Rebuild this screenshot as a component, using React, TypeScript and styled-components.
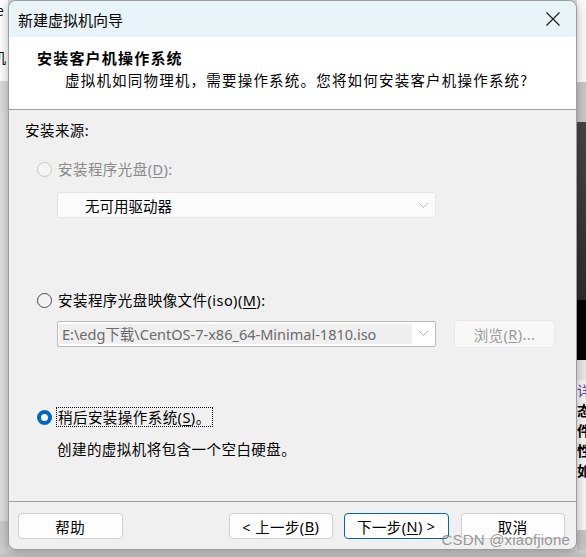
import React from "react"
import styled, { createGlobalStyle } from "styled-components"

const GlobalStyle = createGlobalStyle`
  html, body {
    margin: 0;
    padding: 0;
    background: #d6d6d6;
    overflow: hidden;
  }
  body {
    font-family: "Noto Sans", "Noto Sans CJK SC", sans-serif;
    font-size: 14.5px;
    color: #000;
  }
`

const Desktop = styled("div")`
  position: relative;
  display: grid;
  grid-template-columns: 8px 569px 9px;
  grid-template-rows: 550px 7px;
  width: 586px;
  height: 557px;
  overflow: hidden;
`

const Edge = styled("div")`
  display: flex;
  flex-direction: column;
  overflow: hidden;
`

const Stripe = styled("div")<{ $h: number; $bg: string; $color?: string }>`
  flex: 0 0 ${({ $h }) => $h}px;
  background: ${({ $bg }) => $bg};
  color: ${({ $color }) => $color || "#000"};
  font-family: "Noto Sans CJK SC", sans-serif;
  font-size: 14px;
  line-height: 20px;
  white-space: nowrap;
  overflow: hidden;
`

const BottomStrip = styled("div")`
  grid-column: 1 / 4;
  background: linear-gradient(#cfcfcf, #bdbdbd);
`

const Dialog = styled("div")`
  display: flex;
  flex-direction: column;
  border: 1px solid #9c9c9c;
  border-radius: 8px;
  overflow: hidden;
  background: #f0f0f0;
  box-shadow: 0 2px 10px rgba(0, 0, 0, 0.28);
  box-sizing: border-box;
  z-index: 1;
`

const TitleBar = styled("div")`
  display: flex;
  align-items: center;
  justify-content: space-between;
  height: 36px;
  flex: 0 0 36px;
  padding: 0 0 0 9px;
  background: #e8f4f7;
  font-family: "Noto Sans CJK SC", sans-serif;
  font-size: 15px;
`

const CloseButton = styled("div")`
  display: flex;
  align-items: center;
  justify-content: center;
  width: 46px;
  height: 36px;
`

const Header = styled("div")`
  flex: 0 0 73px;
  display: flex;
  flex-direction: column;
  background: #fff;
  border-bottom: 1px solid #a0a0a0;
  box-sizing: border-box;
  padding: 10px 0 0 28px;
`

const HeaderTitle = styled("div")`
  font-family: "Noto Sans CJK SC", sans-serif;
  font-weight: 700;
  font-size: 15px;
  letter-spacing: 1.2px;
  line-height: 22px;
`

const HeaderSub = styled("div")`
  font-family: "Noto Sans CJK SC", sans-serif;
  font-size: 14.5px;
  letter-spacing: 1.2px;
  line-height: 22px;
  padding-left: 28px;
`

const Body = styled("div")`
  flex: 1;
  display: flex;
  flex-direction: column;
  padding: 10px 0 0 16px;
  letter-spacing: 0.45px;
`

const Text = styled("div")<{ $top?: number; $indent?: number; $muted?: boolean }>`
  margin-top: ${({ $top }) => $top || 0}px;
  padding-left: ${({ $indent }) => $indent || 0}px;
  line-height: 20px;
  color: ${({ $muted }) => ($muted ? "#8a8a8a" : "#000")};
  white-space: nowrap;
`

const RadioRow = styled("div")<{ $top: number }>`
  display: flex;
  align-items: center;
  gap: 4px;
  margin-top: ${({ $top }) => $top}px;
  padding-left: 12px;
  height: 20px;
`

const RadioDot = styled("span")<{ $state: "disabled" | "off" | "on" }>`
  width: 15px;
  height: 15px;
  border-radius: 50%;
  box-sizing: border-box;
  flex: 0 0 15px;
  border: ${({ $state }) =>
    $state === "on" ? "4.5px solid #0067c0" : $state === "off" ? "1px solid #4a4a4a" : "1px solid #c6c6c6"};
  background: ${({ $state }) => ($state === "on" ? "#fff" : $state === "off" ? "#f3f3f3" : "#f5f5f5")};
`

const RadioLabel = styled("span")<{ $muted?: boolean; $focused?: boolean }>`
  color: ${({ $muted }) => ($muted ? "#8a8a8a" : "#000")};
  line-height: 18px;
  padding: 0 1px;
  border: 1px dotted ${({ $focused }) => ($focused ? "#000" : "transparent")};
  white-space: nowrap;
`

const Key = styled("u")`
  text-underline-offset: 2px;
`

const ComboRow = styled("div")<{ $top: number }>`
  display: flex;
  align-items: center;
  gap: 18px;
  margin-top: ${({ $top }) => $top}px;
  padding-left: 32px;
`

const Combo = styled("div")<{ $plain?: boolean }>`
  display: flex;
  align-items: center;
  width: 379px;
  height: 26px;
  box-sizing: border-box;
  border: 1px solid ${({ $plain }) => ($plain ? "#e6e6e6" : "#bcbcbc")};
  border-radius: 2px;
  background: ${({ $plain }) => ($plain ? "#fbfbfb" : "#fff")};
  padding: 2px 0 2px ${({ $plain }) => ($plain ? 27 : 1)}px;
`

const ComboValue = styled("div")<{ $field?: boolean }>`
  flex: 1;
  align-self: stretch;
  display: flex;
  align-items: center;
  padding-left: ${({ $field }) => ($field ? 3 : 0)}px;
  background: ${({ $field }) => ($field ? "#efefef" : "transparent")};
  color: ${({ $field }) => ($field ? "#6a6a6a" : "#000")};
  letter-spacing: 0;
  white-space: nowrap;
  overflow: hidden;
`

const Chevron = styled("div")`
  flex: 0 0 23px;
  display: flex;
  justify-content: center;
  align-items: center;
`

const Footer = styled("div")`
  flex: 0 0 48px;
  display: flex;
  align-items: flex-start;
  border-top: 1px solid #a0a0a0;
  padding: 11px 11px 0 9px;
  box-sizing: border-box;
`

const Button = styled("div")<{ $primary?: boolean; $disabled?: boolean; $gapLeft?: number }>`
  display: flex;
  align-items: center;
  justify-content: center;
  width: 105px;
  height: 26px;
  box-sizing: border-box;
  margin-left: ${({ $gapLeft }) => $gapLeft || 0}px;
  border: 1px solid ${({ $primary, $disabled }) => ($primary ? "#0067c0" : $disabled ? "#e8e8e8" : "#d0d0d0")};
  border-radius: 4px;
  background: ${({ $disabled }) => ($disabled ? "#f8f8f8" : "#fdfdfd")};
  color: ${({ $disabled }) => ($disabled ? "#9a9a9a" : "#000")};
  letter-spacing: 0.4px;
  white-space: nowrap;
`

const BrowseButton = styled(Button)`
  width: 101px;
  height: 28px;
  margin-top: 1px;
`

const Watermark = styled("div")`
  position: absolute;
  right: 16px;
  bottom: 9px;
  z-index: 2;
  font-family: "Liberation Sans", Arial, sans-serif;
  font-size: 15px;
  color: rgba(120, 120, 120, 0.75);
  letter-spacing: 0.2px;
`

const ChevronIcon = ({ color }: { color: string }) => (
  <svg width="11" height="7" viewBox="0 0 11 7">
    <path d="M1 1 L5.5 5.5 L10 1" fill="none" stroke={color} strokeWidth="1" />
  </svg>
)

const App: React.FC = () => {
  return (
    <Desktop>
      <GlobalStyle />
      <Edge>
        <Stripe $h={37} $bg="#fbfbfb">
          <span style={{ marginLeft: -4 }}>e</span>
        </Stripe>
        <Stripe $h={44} $bg="#fbfbfb">
          <div style={{ marginLeft: -8, marginTop: 10 }}>机</div>
        </Stripe>
        <Stripe $h={32} $bg="#d9d9d9" />
        <Stripe $h={408} $bg="#dcdcdc" />
        <Stripe $h={29} $bg="#c9c9c9" />
      </Edge>
      <Dialog>
        <TitleBar>
          新建虚拟机向导
          <CloseButton>
            <svg width="14" height="14" viewBox="0 0 14 14">
              <path d="M0.5 0.5 L13.5 13.5 M13.5 0.5 L0.5 13.5" stroke="#1a1a1a" strokeWidth="1.1" />
            </svg>
          </CloseButton>
        </TitleBar>
        <Header>
          <HeaderTitle>安装客户机操作系统</HeaderTitle>
          <HeaderSub>虚拟机如同物理机，需要操作系统。您将如何安装客户机操作系统?</HeaderSub>
        </Header>
        <Body>
          <Text>安装来源:</Text>
          <RadioRow $top={19}>
            <RadioDot $state="disabled" />
            <RadioLabel $muted>
              安装程序光盘(<Key>D</Key>):
            </RadioLabel>
          </RadioRow>
          <ComboRow $top={13}>
            <Combo $plain>
              <ComboValue>无可用驱动器</ComboValue>
              <Chevron>
                <ChevronIcon color="#c4c4c4" />
              </Chevron>
            </Combo>
          </ComboRow>
          <RadioRow $top={72}>
            <RadioDot $state="off" />
            <RadioLabel>
              安装程序光盘映像文件(iso)(<Key>M</Key>):
            </RadioLabel>
          </RadioRow>
          <ComboRow $top={9}>
            <Combo>
              <ComboValue $field>E:\edg下载\CentOS-7-x86_64-Minimal-1810.iso</ComboValue>
              <Chevron>
                <ChevronIcon color="#b5b5b5" />
              </Chevron>
            </Combo>
            <BrowseButton $disabled>
              浏览(<Key>R</Key>)...
            </BrowseButton>
          </ComboRow>
          <RadioRow $top={59}>
            <RadioDot $state="on" />
            <RadioLabel $focused>
              稍后安装操作系统(<Key>S</Key>)。
            </RadioLabel>
          </RadioRow>
          <Text $top={12} $indent={32}>
            创建的虚拟机将包含一个空白硬盘。
          </Text>
        </Body>
        <Footer>
          <Button>帮助</Button>
          <Button $gapLeft={106}>
            &lt; 上一步(<Key>B</Key>)
          </Button>
          <Button $primary $gapLeft={11}>
            下一步(<Key>N</Key>) &gt;
          </Button>
          <Button $gapLeft={12}>取消</Button>
        </Footer>
      </Dialog>
      <Edge>
        <Stripe $h={82} $bg="#f9f9f9" />
        <Stripe $h={40} $bg="#c6c6c6" />
        <Stripe $h={178} $bg="linear-gradient(#454545, #2c2c2c)" />
        <Stripe $h={60} $bg="#000" />
        <Stripe $h={20} $bg="#e6e6e6" />
        <Stripe $h={150} $bg="#f4f4f4" $color="#5a3fb0">
          <div>详</div>
          <div style={{ color: "#000", fontWeight: 700 }}>态</div>
          <div style={{ color: "#000", fontWeight: 700 }}>件</div>
          <div style={{ color: "#000", fontWeight: 700 }}>性</div>
          <div style={{ color: "#000", fontWeight: 700 }}>如</div>
        </Stripe>
        <Stripe $h={20} $bg="#c3c3c3" />
      </Edge>
      <BottomStrip />
      <Watermark>CSDN @xiaofjione</Watermark>
    </Desktop>
  )
}

export default App
